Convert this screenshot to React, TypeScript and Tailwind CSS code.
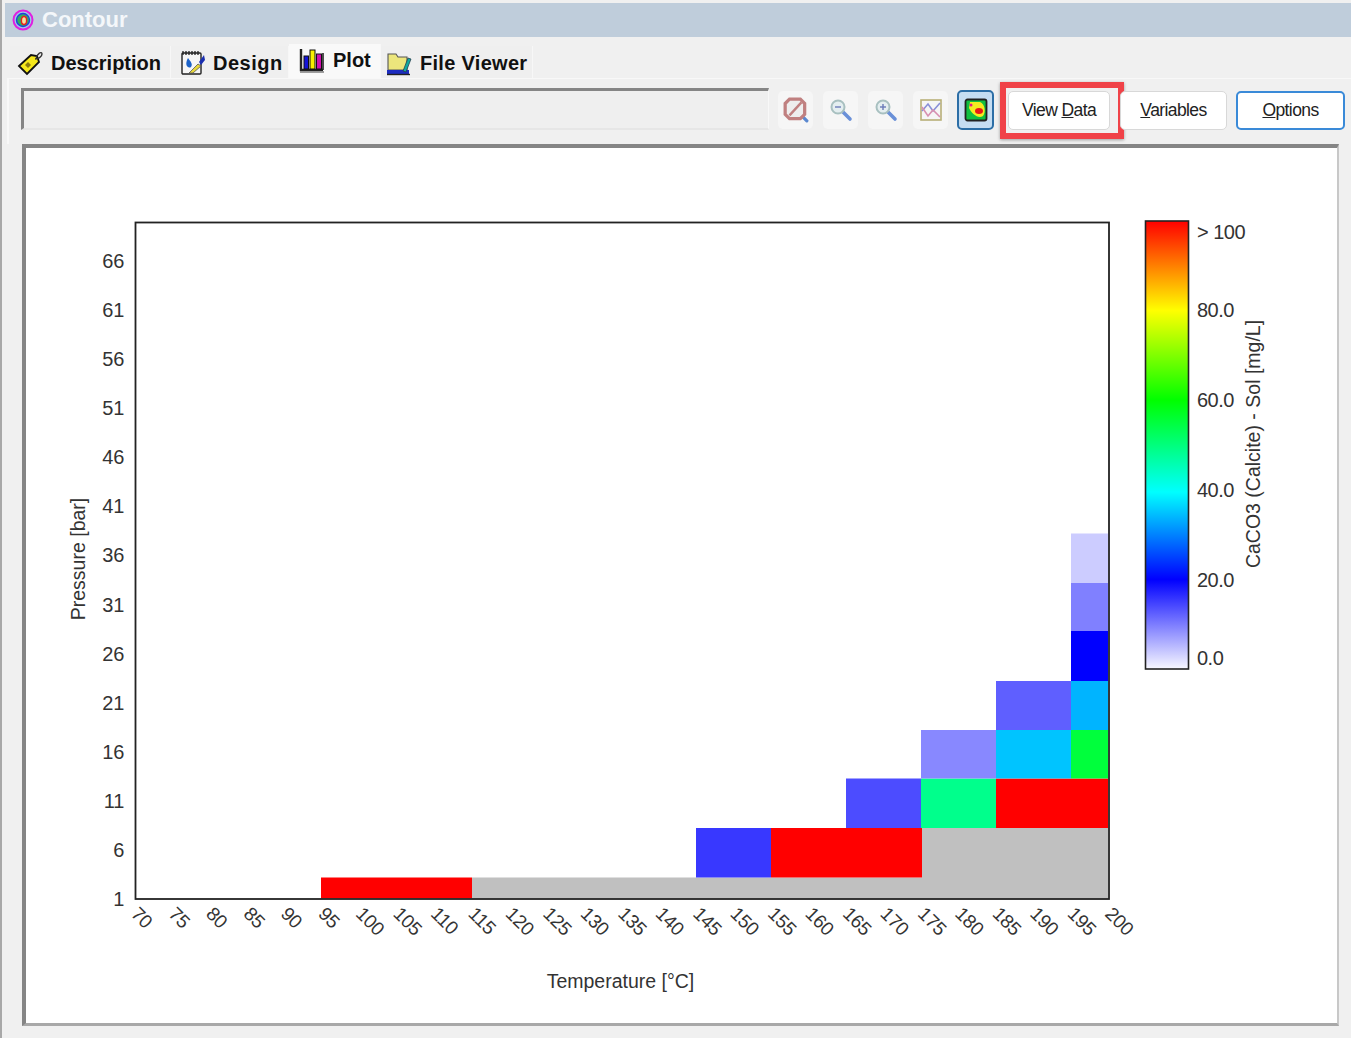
import { ReactNode } from "react"

const yLabels = [66, 61, 56, 51, 46, 41, 36, 31, 26, 21, 16, 11, 6, 1]
const xLabels = Array.from({ length: 27 }, (_, i) => 70 + i * 5)

// x, y, width, height, fill in page pixels
const cells: [number, number, number, number, string][] = [
  [472, 877.5, 636, 21, "#c0c0c0"],
  [922, 828, 186, 50, "#c0c0c0"],
  [321, 877.5, 151, 21, "#ff0000"],
  [696, 828, 75, 49.5, "#3838ff"],
  [771, 828, 151, 49.5, "#ff0000"],
  [846, 778.5, 75, 49.5, "#4c4cff"],
  [921, 778.5, 75, 49.5, "#00ff8c"],
  [996, 778.5, 112, 49.5, "#ff0000"],
  [921, 730, 75, 48.5, "#8888ff"],
  [996, 730, 75, 48.5, "#00c4ff"],
  [1071, 730, 37, 48.5, "#00ff3c"],
  [996, 681, 75, 49, "#5f5fff"],
  [1071, 681, 37, 49, "#00b4ff"],
  [1071, 631, 37, 50, "#0000ff"],
  [1071, 583, 37, 48, "#8080ff"],
  [1071, 533.5, 37, 49.5, "#ccccff"],
]

const legendLabels: [string, number][] = [
  ["> 100", 239],
  ["80.0", 317],
  ["60.0", 407],
  ["40.0", 497],
  ["20.0", 587],
  ["0.0", 665],
]

function TagIcon() {
  return (
    <svg viewBox="0 0 26 26" className="w-[26px] h-[26px] shrink-0">
      <path d="M2 16 L14 5 L20 6 L22 12 L10 24 Z" fill="#f6e81c" stroke="#111" strokeWidth="1.8" />
      <path d="M8 15 l3 -3 l3 3 l-3 3 Z" fill="#8a7a10" />
      <path d="M19 9 C20 3 25 1 25 4 C25 7 21 9 18 9" fill="none" stroke="#333" strokeWidth="1.4" />
    </svg>
  )
}

function NotebookIcon() {
  return (
    <svg viewBox="0 0 26 26" className="w-[26px] h-[26px] shrink-0">
      <rect x="2" y="3" width="19" height="21" rx="1" fill="#f6f6f6" stroke="#222" strokeWidth="1.4" />
      <path d="M3 1v4M6 1v4M9 1v4M12 1v4M15 1v4M18 1v4" stroke="#222" strokeWidth="1.3" />
      <path d="M8 8 C11 12 13 14 11 17 C8 19 4 15 8 8 Z" fill="#1c62c8" />
      <path d="M9 23 L18 14 L21 16 L13 23 Z" fill="#e8d83a" stroke="#555" strokeWidth="0.8" />
      <path d="M19 12 L24 5 L25 10 L21 15 Z" fill="#1a2fb0" />
    </svg>
  )
}

function BarsIcon() {
  return (
    <svg viewBox="0 0 26 26" className="w-[26px] h-[26px] shrink-0">
      <path d="M2 2 V23 H24" fill="none" stroke="#222" strokeWidth="2.4" />
      <path d="M24 6 V23" stroke="#222" strokeWidth="1.6" />
      <rect x="5" y="9" width="4.5" height="13" fill="#1414d8" stroke="#111" strokeWidth="1" />
      <rect x="11" y="3" width="5" height="19" fill="#f8f000" stroke="#111" strokeWidth="1" />
      <rect x="17.5" y="7" width="5" height="15" fill="#d010b0" stroke="#111" strokeWidth="1" />
      <path d="M1 25 H25" stroke="#888" strokeWidth="1.6" />
    </svg>
  )
}

function FolderIcon() {
  return (
    <svg viewBox="0 0 26 26" className="w-[26px] h-[26px] shrink-0">
      <path d="M2 4 H10 L12 7 H21 V20 H2 Z" fill="#ece67c" stroke="#555" strokeWidth="1.1" />
      <rect x="1" y="20" width="22" height="4" fill="#1c2cc0" />
      <path d="M1 24.5 H24" stroke="#222" strokeWidth="1.4" />
      <path d="M17 21 L22 8 L25 9 L20 22 Z" fill="#10a8a0" stroke="#234" strokeWidth="0.7" />
    </svg>
  )
}

function TitleIcon() {
  return (
    <svg viewBox="0 0 22 22" className="w-[22px] h-[22px] shrink-0">
      <circle cx="11" cy="11" r="9.5" fill="#9ec8e8" stroke="#e020e0" strokeWidth="2" />
      <circle cx="11" cy="11" r="6.5" fill="#30b060" stroke="#2040e0" strokeWidth="1.4" />
      <ellipse cx="12" cy="11.5" rx="2.6" ry="4" fill="#f6e0a0" stroke="#e82020" strokeWidth="1.4" />
    </svg>
  )
}

function Lens({ sign }: { sign: "minus" | "plus" }) {
  return (
    <svg viewBox="0 0 24 24" className="w-[24px] h-[24px]">
      <path d="M13 13 L21 21" stroke="#6a90d8" strokeWidth="3.6" strokeLinecap="round" />
      <circle cx="9" cy="9" r="6.5" fill="#e4eef0" stroke="#a8c0c0" strokeWidth="2" />
      <path d="M6 9 H12" stroke="#6a7ab8" strokeWidth="1.4" />
      {sign === "plus" && <path d="M9 6 V12" stroke="#6a7ab8" strokeWidth="1.4" />}
    </svg>
  )
}

function NoZoomIcon() {
  return (
    <svg viewBox="0 0 24 24" className="w-[26px] h-[26px]">
      <path d="M17 17 L22 22" stroke="#5a88d0" strokeWidth="3" strokeLinecap="round" />
      <path d="M6 2 H16 L20 6 V16 L16 20 H6 L2 16 V6 Z" fill="#eee" stroke="#c08080" strokeWidth="3" />
      <path d="M6 17 L17 5" stroke="#c08080" strokeWidth="2.2" />
    </svg>
  )
}

function LinesIcon() {
  return (
    <svg viewBox="0 0 24 24" className="w-[24px] h-[24px]">
      <rect x="2" y="2" width="20" height="20" fill="#f6f6f6" stroke="#b8b078" strokeWidth="1.6" />
      <path d="M3 13 L9 6 L14 13 L21 5" fill="none" stroke="#8a90d8" strokeWidth="1.6" />
      <path d="M3 9 L9 18 L14 12 L21 19" fill="none" stroke="#d890b0" strokeWidth="1.6" />
    </svg>
  )
}

function ContourIcon() {
  return (
    <svg viewBox="0 0 24 24" className="w-[24px] h-[24px]">
      <rect x="1.5" y="1.5" width="21" height="21" rx="2" fill="#10c040" stroke="#222" strokeWidth="1.8" />
      <path d="M6 4 H16 C21 6 22 14 19 18 C14 21 8 16 5 10 Z" fill="#f4ec20" />
      <ellipse cx="15" cy="13" rx="4" ry="3" fill="#e81818" />
      <circle cx="7" cy="7" r="1.5" fill="#e01890" />
    </svg>
  )
}

function Tab({ icon, label, active, className }: { icon: ReactNode; label: string; active?: boolean; className: string }) {
  return (
    <div
      className={`flex items-center border-r border-[#f7f7f7] ${
        active ? "h-[34px] bg-[#f9f9f9] pb-[2px]" : "h-[32px] bg-[#efefef] pt-[1px]"
      } ${className}`}
    >
      {icon}
      <span className="text-[20px] font-bold text-[#111] whitespace-nowrap">{label}</span>
    </div>
  )
}

function ToolButton({ children, className }: { children: ReactNode; className: string }) {
  return (
    <div className={`mt-[3px] flex h-[38px] w-[35px] items-center justify-center rounded-[5px] bg-[#f6f6f6] ${className}`}>
      {children}
    </div>
  )
}

function TextButton({ children, className }: { children: ReactNode; className: string }) {
  return (
    <div
      className={`relative mt-[3px] flex h-[39px] items-center justify-center rounded-[5px] bg-white text-[17.5px] tracking-[-0.6px] text-[#222] ${className}`}
    >
      {children}
    </div>
  )
}

function Plot() {
  return (
    <svg viewBox="26 148 1310 873" className="block w-[1310px] h-[873px]">
      <defs>
        <linearGradient id="legend" x1="0" y1="0" x2="0" y2="1">
          <stop offset="0" stopColor="#ff0000" />
          <stop offset="0.2" stopColor="#ffff00" />
          <stop offset="0.4" stopColor="#00ff00" />
          <stop offset="0.605" stopColor="#00ffff" />
          <stop offset="0.8" stopColor="#0000ff" />
          <stop offset="1" stopColor="#f8f8ff" />
        </linearGradient>
      </defs>

      {cells.map(([x, y, w, h, fill], i) => (
        <rect key={i} x={x} y={y} width={w} height={h} fill={fill} />
      ))}
      <rect x="135.5" y="222.5" width="973.5" height="676.5" fill="none" stroke="#222" strokeWidth="1.8" />

      {yLabels.map((v, i) => (
        <text key={v} x="124" y={268 + i * 49.08} textAnchor="end" fontSize="20" letterSpacing="-0.3" fill="#333">
          {v}
        </text>
      ))}
      {xLabels.map((v, i) => {
        const x = 130 + i * 37.46
        return (
          <text key={v} x={x} y="915" fontSize="19" letterSpacing="-0.3" fill="#333" transform={`rotate(45 ${x} 915)`}>
            {v}
          </text>
        )
      })}

      <text x="620.5" y="988" textAnchor="middle" fontSize="19.5" fill="#333">
        Temperature [°C]
      </text>
      <text x="0" y="0" textAnchor="middle" fontSize="19.5" fill="#333" transform="translate(85 559) rotate(-90)">
        Pressure [bar]
      </text>

      <rect x="1145.5" y="221" width="43" height="448" fill="url(#legend)" stroke="#222" strokeWidth="1.6" />
      {legendLabels.map(([t, y]) => (
        <text key={t} x="1197" y={y} fontSize="20" letterSpacing="-0.5" fill="#333">
          {t}
        </text>
      ))}
      <text x="0" y="0" textAnchor="middle" fontSize="19.5" fill="#333" transform="translate(1260 444) rotate(-90)">
        CaCO3 (Calcite) - Sol [mg/L]
      </text>
    </svg>
  )
}

export default function App() {
  return (
    <div className="w-[1351px] h-[1038px] overflow-hidden bg-[#f0f0f0] border-l-2 border-[#a8a8a8] pt-[3px] font-['Liberation_Sans',Arial,sans-serif]">
      {/* Title bar */}
      <div className="ml-[3px] flex h-[34px] items-center gap-[8px] bg-[#bfcddb] pl-[7px]">
        <TitleIcon />
        <span className="pb-[2px] text-[22px] font-bold text-[#f4f7fa]">Contour</span>
      </div>

      {/* Tabs */}
      <div className="ml-[5px] mt-[7px] flex h-[35px] items-start border-b border-[#f8f8f8] pl-[3px]">
        <Tab icon={<TagIcon />} label="Description" className="mt-[2px] w-[161px] gap-[8px] pl-[7px]" />
        <Tab icon={<NotebookIcon />} label="Design" className="mt-[2px] w-[118px] gap-[7px] pl-[9px] tracking-[0.5px]" />
        <Tab icon={<BarsIcon />} label="Plot" active className="w-[92px] gap-[8px] pl-[10px]" />
        <Tab icon={<FolderIcon />} label="File Viewer" className="mt-[2px] w-[152px] gap-[8px] pl-[5px] tracking-[0.3px]" />
      </div>

      {/* Toolbar */}
      <div className="ml-[5px] flex h-[65px] items-center border-l-2 border-[#f8f8f8] pl-[12px] pb-[6px] text-[#222]">
        <div className="h-[42px] w-[748px] border-t-[3px] border-l-[3px] border-r border-b-2 border-t-[#858585] border-l-[#858585] border-r-[#f8f8f8] border-b-[#e6e6e6] bg-[#efefef]" />
        <ToolButton className="ml-[9px]">
          <NoZoomIcon />
        </ToolButton>
        <ToolButton className="ml-[10px]">
          <Lens sign="minus" />
        </ToolButton>
        <ToolButton className="ml-[10px]">
          <Lens sign="plus" />
        </ToolButton>
        <ToolButton className="ml-[10px]">
          <LinesIcon />
        </ToolButton>
        <div className="ml-[9px] mt-[3px] flex h-[40px] w-[37px] items-center justify-center rounded-[5px] border-2 border-[#2c6ea6] bg-[#c5ddf2]">
          <ContourIcon />
        </div>
        <TextButton className="ml-[14px] w-[102px] border border-[#d8d8d8]">
          <span>
            View <span className="underline">D</span>ata
          </span>
          {/* highlight drawn over the button */}
          <span className="absolute -left-[9px] -top-[10px] h-[57px] w-[124px] border-[6px] border-[#f04248] shadow-[0_1px_3px_rgba(0,0,0,0.35)]" />
        </TextButton>
        <TextButton className="ml-[10px] w-[107px] border border-[#d8d8d8]">
          <span>
            <span className="underline">V</span>ariables
          </span>
        </TextButton>
        <TextButton className="ml-[9px] w-[109px] border-2 border-[#3a8ad8]">
          <span>
            <span className="underline">O</span>ptions
          </span>
        </TextButton>
      </div>

      {/* Plot panel */}
      <div className="ml-[20px] w-[1317px] h-[882px] border-t-[4px] border-l-[4px] border-r-2 border-b-[3px] border-t-[#858585] border-l-[#858585] border-r-[#c8c8c8] border-b-[#a8a8a8] bg-white">
        <Plot />
      </div>
    </div>
  )
}
